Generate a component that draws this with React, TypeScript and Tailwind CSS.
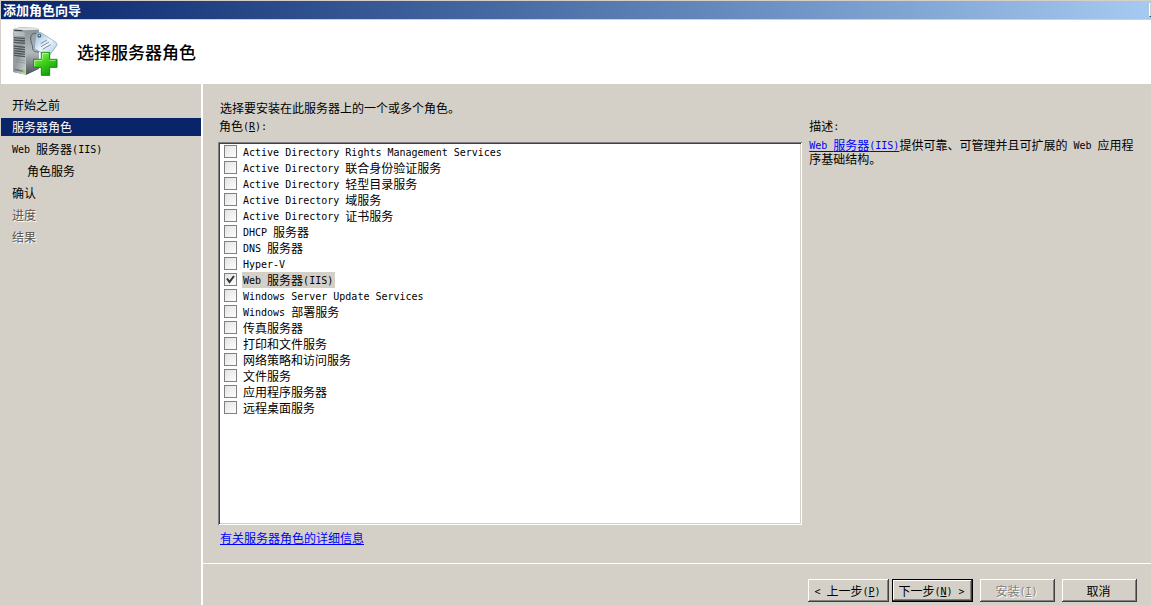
import { Fragment, useState } from 'react';
import type { ButtonHTMLAttributes, ReactNode } from 'react';
import clsx from 'clsx';

const steps = [
  { label: '开始之前' },
  { label: '服务器角色', current: true },
  { label: 'Web 服务器(IIS)' },
  { label: '角色服务', nested: true },
  { label: '确认' },
  { label: '进度', disabled: true },
  { label: '结果', disabled: true },
];

const roles = [
  'Active Directory Rights Management Services',
  'Active Directory 联合身份验证服务',
  'Active Directory 轻型目录服务',
  'Active Directory 域服务',
  'Active Directory 证书服务',
  'DHCP 服务器',
  'DNS 服务器',
  'Hyper-V',
  'Web 服务器(IIS)',
  'Windows Server Update Services',
  'Windows 部署服务',
  '传真服务器',
  '打印和文件服务',
  '网络策略和访问服务',
  '文件服务',
  '应用程序服务器',
  '远程桌面服务',
];

// Latin runs take half the width of a Chinese character, as in a bitmap UI font
const Latin = ({ children }: { children: ReactNode }) => (
  <span className="align-[1px] font-['DejaVu_Sans_Mono',monospace] text-[10px] leading-none">
    {children}
  </span>
);

const Mixed = ({ text }: { text: string }) => (
  <>
    {text
      .split(/([\x20-\x7e]+)/)
      .map((part, index) =>
        index % 2 === 1 ? <Latin key={index}>{part}</Latin> : <Fragment key={index}>{part}</Fragment>,
      )}
  </>
);

const AccessKey = ({ letter }: { letter: string }) => (
  <Latin>
    (<u>{letter}</u>)
  </Latin>
);

const ServerIcon = () => (
  <svg viewBox="0 0 180 192" className="h-16 w-[60px] shrink-0" aria-hidden="true">
    <defs>
      <linearGradient id="front" x1="0" y1="0" x2="1" y2="1">
        <stop offset="0" stopColor="#b4babd" />
        <stop offset="0.5" stopColor="#949b9f" />
        <stop offset="1" stopColor="#d0d4d5" />
      </linearGradient>
      <linearGradient id="side" x1="0" y1="0" x2="0" y2="1">
        <stop offset="0" stopColor="#8d9599" />
        <stop offset="0.5" stopColor="#b4babd" />
        <stop offset="1" stopColor="#4d5457" />
      </linearGradient>
      <linearGradient id="tag" x1="0" y1="0" x2="1" y2="1">
        <stop offset="0" stopColor="#8fb4d3" />
        <stop offset="0.5" stopColor="#eef6fc" />
        <stop offset="1" stopColor="#a2c6e3" />
      </linearGradient>
      <linearGradient id="plus" x1="0" y1="0" x2="0.6" y2="1">
        <stop offset="0" stopColor="#b6f27a" />
        <stop offset="0.5" stopColor="#3fd31c" />
        <stop offset="1" stopColor="#14a00c" />
      </linearGradient>
    </defs>
    <path d="M24 28 L44 22 L98 24 L102 30 V146 L64 164 L25 156 Z" fill="#6c7377" />
    <path d="M24 28 L63 30 V164 L25 156 Z" fill="url(#front)" />
    <path d="M63 30 L102 29 V146 L63 164 Z" fill="url(#side)" />
    <path d="M24 28 L44 22 L98 24 L102 29 L63 31 Z" fill="#dfe2e3" />
    <path d="M28 31 L52 32" stroke="#333a3e" strokeWidth="3" />
    <path d="M28 38 L59 40 M28 44 L59 46" stroke="#e6e9ea" strokeWidth="2" />
    <path
      d="M27 53 L60 56 M27 60 L60 63 M27 67 L60 70 M27 78 L60 82 M27 85 L60 89 M27 92 L60 96 M27 99 L60 103 M27 106 L60 110"
      stroke="#4b5359"
      strokeWidth="4"
    />
    <path d="M27 117 L60 122 M27 124 L60 129" stroke="#858d91" strokeWidth="2" />
    <path d="M29 148 L59 155" stroke="#62696d" strokeWidth="4" />
    <rect x="53" y="152" width="7" height="6" fill="#74ed29" />
    <path
      d="M104 48 C91 34 76 39 77 57 C78 72 83 72 83 84 C84 96 92 96 102 96"
      fill="none"
      stroke="#565e63"
      strokeWidth="3"
    />
    <path
      d="M92 43 Q96 36 108 38 L153 67 Q158 72 155 77 L134 105 Q129 110 123 106 L88 86 Z"
      fill="url(#tag)"
      stroke="#779cbb"
      strokeWidth="2"
      strokeLinejoin="round"
    />
    <circle cx="103" cy="47" r="6" fill="#52677a" />
    <circle cx="103" cy="46" r="2" fill="#fff" />
    <path d="M107 71 L126 60 M108 80 L132 66 M113 88 L137 74" stroke="#778caa" strokeWidth="3" />
    <path
      d="M109 97 H134 V118 H156 V142 H134 V166 H109 V142 H86 V118 H109 Z"
      fill="url(#plus)"
      stroke="#148c12"
      strokeWidth="3"
      strokeLinejoin="round"
    />
    <path
      d="M112 118 V100 H130 M89 139 V121 H111 M134 121 H152"
      fill="none"
      stroke="#d6ffb8"
      strokeWidth="2"
    />
  </svg>
);

const RoleItem = ({
  name,
  checked,
  onChange,
}: {
  name: string;
  checked: boolean;
  onChange: () => void;
}) => (
  <li>
    <label className="flex h-4 items-start gap-[5px]">
      <span className="relative mt-px flex size-[13px] shrink-0">
        <input
          type="checkbox"
          checked={checked}
          onChange={onChange}
          className="size-[13px] appearance-none border border-[#808080] bg-linear-to-br from-[#e2e2e2] to-white"
        />
        {checked && (
          <svg viewBox="0 0 13 13" className="pointer-events-none absolute inset-0" aria-hidden="true">
            <path d="M3 5.5 L5.5 9 L10 3" fill="none" stroke="#333" strokeWidth="2" />
          </svg>
        )}
      </span>
      <span className={clsx('h-4 pr-[2px] pl-px leading-4 whitespace-nowrap', checked && 'bg-[#d4d0c8]')}>
        <Mixed text={name} />
      </span>
    </label>
  </li>
);

const WizardButton = ({
  primary,
  className,
  ...props
}: ButtonHTMLAttributes<HTMLButtonElement> & { primary?: boolean }) => (
  <button
    type="button"
    className={clsx(
      'h-[23px] bg-[#d4d0c8] pr-[2px] leading-[14px] whitespace-pre shadow-[inset_-1px_-1px_#404040,inset_1px_1px_#fff,inset_-2px_-2px_#808080]',
      'disabled:text-[#808080] disabled:[text-shadow:1px_1px_0_#fff]',
      primary && 'border border-black',
      className,
    )}
    {...props}
  />
);

export default function App() {
  const [selected, setSelected] = useState(['Web 服务器(IIS)']);

  const toggle = (name: string) =>
    setSelected((current) =>
      current.includes(name) ? current.filter((item) => item !== name) : [...current, name],
    );

  return (
    <div className="flex min-h-screen flex-col bg-[#d4d0c8] pt-px pl-px font-['Noto_Sans_CJK_SC',sans-serif] text-xs leading-[14px] text-black">
      <div className="flex h-[18px] items-center justify-between bg-linear-to-r from-[#0a246a] to-[#a6caf0] pl-[2px]">
        <span className="text-[13px] leading-[18px] font-bold text-white">添加角色向导</span>
        <span className="h-[14px] w-[2px] border-b border-l border-b-[#404040] border-l-white bg-[#d4d0c8]" />
      </div>

      <header className="mt-px flex h-16 items-center gap-3 bg-white pl-1">
        <ServerIcon />
        <h1 className="text-[17px] leading-6 font-medium">选择服务器角色</h1>
      </header>

      <div className="flex flex-1">
        <nav className="w-[200px] shrink-0 pt-3">
          <ol className="flex flex-col gap-1">
            {steps.map((step) => (
              <li
                key={step.label}
                aria-current={step.current ? 'step' : undefined}
                className={clsx(
                  'h-[18px] leading-[18px]',
                  step.nested ? 'pl-[26px]' : 'pl-[11px]',
                  step.current && 'bg-[#0a246a] text-white',
                  step.disabled && 'text-[#5a564c] [text-shadow:1px_1px_0_#fff]',
                )}
              >
                <Mixed text={step.label} />
              </li>
            ))}
          </ol>
        </nav>

        <div className="flex flex-1 flex-col border-l-2 border-white">
          <main className="flex flex-1 flex-col pt-[17px] pr-2 pb-[18px] pl-[15px]">
            <p className="pl-[2px]">选择要安装在此服务器上的一个或多个角色。</p>
            <div className="mt-1 grid flex-1 grid-cols-[7fr_4fr] gap-[7px]">
              <section className="flex flex-col">
                <h2 id="roles-label" className="pl-px">
                  角色
                  <AccessKey letter="R" />
                  <Mixed text=":" />
                </h2>
                <ul
                  aria-labelledby="roles-label"
                  className="mt-[9px] flex-1 bg-white py-[2px] pl-[6px] shadow-[inset_1px_1px_#808080,inset_-1px_-1px_#fff,inset_2px_2px_#404040,inset_-2px_-2px_#d4d0c8]"
                >
                  {roles.map((role) => (
                    <RoleItem
                      key={role}
                      name={role}
                      checked={selected.includes(role)}
                      onChange={() => toggle(role)}
                    />
                  ))}
                </ul>
                <a href="#roles" className="mt-[6px] ml-[2px] self-start text-[#0000ff] underline">
                  有关服务器角色的详细信息
                </a>
              </section>

              <section>
                <h2>
                  <Mixed text="描述:" />
                </h2>
                <p className="mt-[5px]">
                  <a href="#iis" className="text-[#0000ff] underline">
                    <Mixed text="Web 服务器(IIS)" />
                  </a>
                  <Mixed text="提供可靠、可管理并且可扩展的 Web 应用程序基础结构。" />
                </p>
              </section>
            </div>
          </main>

          <footer className="flex justify-end border-t border-white pt-[15px] pr-[14px] pb-[3px]">
            <WizardButton className="w-[81px]">
              <Mixed text="< " />
              上一步
              <AccessKey letter="P" />
            </WizardButton>
            <WizardButton primary className="ml-[3px] w-[81px]">
              下一步
              <AccessKey letter="N" />
              <Mixed text=" >" />
            </WizardButton>
            <WizardButton disabled className="ml-[7px] w-[75px]">
              安装
              <AccessKey letter="I" />
            </WizardButton>
            <WizardButton className="ml-[7px] w-[75px]">取消</WizardButton>
          </footer>
        </div>
      </div>
    </div>
  );
}
